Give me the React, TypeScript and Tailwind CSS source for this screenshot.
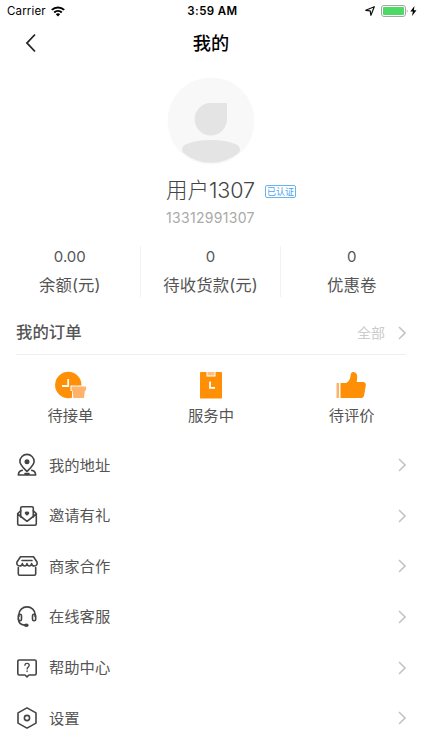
import type { ReactNode } from "react";

const BackIcon = () => (
  <svg width="12" height="20" viewBox="0 0 12 20" fill="none" stroke="#222" strokeWidth="1.8">
    <path d="M10 1.5 2 10l8 8.5" />
  </svg>
);

const ChevronIcon = () => (
  <svg width="9" height="14" viewBox="0 0 9 14" fill="none" stroke="#c4c4c4" strokeWidth="1.6">
    <path d="M2 1 8 7l-6 6" />
  </svg>
);

function StatusBar() {
  return (
    <div className="grid h-[22px] grid-cols-3 items-center pl-[7px] pr-[5px] text-[11.5px] leading-none text-black">
      <div className="flex items-center gap-[5px] pt-px">
        <span className="pt-px tracking-[0.15px]">Carrier</span>
        <svg width="14" height="11" viewBox="0 0 14 11" fill="none" stroke="#000" strokeWidth="2">
          <path d="M.8 3.9a9 9 0 0 1 12.4 0M3.2 6.500a5.500 5.500 0 0 1 7.600 0" />
          <path d="M4.8 8.2a3.2 3.2 0 0 1 4.4 0L7 10.5Z" fill="#000" stroke="none" />
        </svg>
      </div>
      <span className="pt-[2px] pl-px text-center font-semibold tracking-[0.4px]">3:59 AM</span>
      <div className="flex items-center justify-end">
        <svg width="10" height="10" viewBox="0 0 10 10" fill="none" stroke="#111" strokeWidth="1.2" strokeLinejoin="round">
          <path d="M9.300.7 5.900 9.300 5.200 4.900.7 4.300Z" />
        </svg>
        <svg className="ml-[6px]" width="28" height="12" viewBox="0 0 28 12">
          <rect x=".5" y=".5" width="24" height="11" rx="2.5" fill="#fff" stroke="#a5a5a5" />
          <rect x="2" y="2" width="21" height="8" rx="1" fill="#4cd964" />
          <path d="M25.8 4.2c1 .5 1 3.1 0 3.6Z" fill="#a5a5a5" />
        </svg>
        <svg className="ml-px" width="7" height="10" viewBox="0 0 7 10">
          <path d="M4.5 0 .3 5.5h2.6L2 10l4.5-5.8H3.8Z" fill="#000" />
        </svg>
      </div>
    </div>
  );
}

function Avatar() {
  return (
    <svg width="88" height="88" viewBox="0 0 88 88">
      <circle cx="44" cy="44" r="43.5" fill="#f8f8f8" />
      <path d="M43.5 26H60v16.3A16.2 16.2 0 1 1 43.5 26Z" fill="#e4e4e4" />
      <path d="M18.5 67.500c7-3.200 16-4.500 25.500-4.500s18.500 1.300 25.500 4.500c3.500 1.700 4.500 5.800 2.300 8.200A43.500 43.500 0 0 1 16.200 75.700c-2.200-2.400-1.200-6.500 2.300-8.200Z" fill="#e4e4e4" />
    </svg>
  );
}

const stats = [
  { value: "0.00", label: "余额(元)" },
  { value: "0", label: "待收货款(元)" },
  { value: "0", label: "优惠卷" },
];

const orders: { label: string; icon: ReactNode }[] = [
  {
    label: "待接单",
    icon: (
      <svg width="34" height="28" viewBox="0 0 34 28">
        <circle cx="15.300" cy="14" r="13.200" fill="#fe8f06" />
        <path d="M15.200 8v7H9" fill="none" stroke="#fff" strokeWidth="1.800" />
        <path d="M17.500 14.500H34V28H19V20h-1.500Z" fill="#fff" />
        <path d="M18.500 15.500H33v4H18.500ZM19.500 19.400h12.400L31 27H20.400Z" fill="#ffb269" />
      </svg>
    ),
  },
  {
    label: "服务中",
    icon: (
      <svg width="22" height="28" viewBox="0 0 22 28">
        <rect y="1" width="22" height="26.500" rx=".8" fill="#fe8f06" />
        <path d="M6.500 0h9v5.500h-9Z" fill="#fff" />
        <path d="M7.500 1h7v3.500h-7Z" fill="#ffbd7c" />
        <path d="M10 10.500v6.300h5" fill="none" stroke="#fff" strokeWidth="1.800" />
      </svg>
    ),
  },
  {
    label: "待评价",
    icon: (
      <svg width="31" height="28" viewBox="0 0 31 28">
        <path d="M.5 12H3v15H.5Z" fill="#ffb269" />
        <path d="M4.500 12H10c2.500-1 4.300-3.600 4.600-7.500.2-2.600 1.600-3.700 3.200-3.400 2.400.4 3.700 2.700 3.400 5.500L20.700 11H27c2 0 3.100 1.300 2.800 3.200l-1.600 9.700c-.3 2-1.600 3.100-3.500 3.100H4.500Z" fill="#fe8f06" />
      </svg>
    ),
  },
];

const menu: { label: string; icon: ReactNode }[] = [
  {
    label: "我的地址",
    icon: (
      <>
        <path d="M12 18.500C8 14.500 4.900 11.900 4.900 8.500a7.100 7.100 0 0 1 14.200 0c0 3.400-3.100 6-7.100 10Z" />
        <path d="M7.300 17.400c-2.400.2-3.700 1.800-4 4.600h17.400c-.3-2.800-1.600-4.400-4-4.600M10 20.600h4" />
        <circle cx="12" cy="8.700" r="1.700" fill="#444" />
      </>
    ),
  },
  {
    label: "邀请有礼",
    icon: (
      <>
        <path d="M5.700 13V4.100q0-1.300 1.300-1.300h10q1.300 0 1.300 1.300V13" />
        <path d="M5.700 6.800 2.700 9.500v10.200q0 1.500 1.500 1.500h15.600q1.500 0 1.500-1.500V9.500l-3-2.700M2.700 10l9.300 7.300L21.300 10" />
        <path d="m12 10.800-1.200-1.200c-.8-1.200.6-1.900 1.200-.9.600-1 2-.3 1.200.9Z" fill="#444" />
      </>
    ),
  },
  {
    label: "商家合作",
    icon: (
      <>
        <path d="M5.500 2.700h13l3.500 5.300c.7 2.300-.6 4-2.700 4-1.700 0-2.500-1-2.700-2.400-.3 1.600-1.300 2.400-2.300 2.400-1.200 0-2-.8-2.300-2.400-.3 1.600-1.100 2.400-2.300 2.400-1 0-2-.8-2.300-2.400-.2 1.400-1 2.400-2.700 2.400-2.100 0-3.400-1.700-2.700-4ZM7 6.500h10" />
        <path d="M3.300 13.500v6.300q0 1.500 1.500 1.500h14.400q1.500 0 1.500-1.500v-6.300" />
      </>
    ),
  },
  {
    label: "在线客服",
    icon: (
      <>
        <path d="M3.900 11.500v-2a8.100 7.600 0 0 1 16.200 0v2" />
        <rect x="3.300" y="9.300" width="3.200" height="6.400" rx="1.500" />
        <rect x="17.500" y="9.300" width="3.200" height="6.400" rx="1.500" />
        <path d="M3.500 14c0 3.500 1.700 5.700 6 6.100" />
        <ellipse cx="11.300" cy="20.200" rx="1.600" ry="1" fill="#444" />
      </>
    ),
  },
  {
    label: "帮助中心",
    icon: (
      <>
        <path d="M4.300 4h15.400q1.500 0 1.500 1.500v12q0 1.500-1.500 1.500H14l-2 1.800L10 19H4.300q-1.500 0-1.500-1.500v-12Q2.800 4 4.300 4Z" />
        <path d="M9.900 9.300c0-2.700 4.300-2.600 4.300 0 0 1.500-2.100 1.800-2.100 3.700M12.100 14.900v.6" strokeWidth="1.300" />
      </>
    ),
  },
  {
    label: "设置",
    icon: (
      <>
        <path d="m12 1.900 9 5v10.200l-9 5-9-5V6.900Z" />
        <circle cx="12" cy="12" r="2.600" />
      </>
    ),
  },
];

export default function App() {
  return (
    <div className="flex h-[750px] w-[422px] flex-col overflow-hidden bg-white font-['Inter','Noto_Sans_CJK_SC',sans-serif] text-[#555]">
      <StatusBar />

      <header className="grid h-[42px] grid-cols-3 items-center">
        <div className="pl-[25px]">
          <BackIcon />
        </div>
        <h1 className="text-center text-[18.200px] leading-none font-medium text-black">我的</h1>
      </header>

      <section className="flex flex-col items-center pt-[13px]">
        <Avatar />
        <div className="mt-[12px] flex h-7 items-center gap-[8px] self-start pl-[166px]">
          <span className="w-[91px] text-[21.500px] leading-none font-light tracking-[-0.050px] whitespace-nowrap text-[#444]">
            用户1307
          </span>
          <span className="flex h-[13px] w-[31px] items-center justify-center rounded-[2px] border border-[#6bb3f0] text-[9px] leading-none text-[#4ba3ee]">
            已认证
          </span>
        </div>
        <div className="mt-[4px] self-start pl-[166px] text-[14px] leading-[18px] tracking-[0.300px] text-[#aaa]">
          13312991307
        </div>
      </section>

      <section className="mt-[19px] grid h-[48px] grid-cols-3 divide-x divide-[#f2f2f2]">
        {stats.map((item) => (
          <div key={item.label} className="flex flex-col items-center">
            <span className="mt-[2px] text-[15px] leading-[18px]">{item.value}</span>
            <span className="mt-[7px] text-[16.400px] leading-[24px] tracking-[0.100px] whitespace-nowrap">{item.label}</span>
          </div>
        ))}
      </section>

      <section>
        <div className="mx-4 mt-[17px] flex h-[44px] items-center border-b border-[#eee]">
          <h2 className="text-[16.400px] leading-none font-medium">我的订单</h2>
          <span className="ml-auto text-[14px] leading-none text-[#ccc]">全部</span>
          <span className="ml-[12px]">
            <ChevronIcon />
          </span>
        </div>
        <div className="grid grid-cols-3 pt-[16px]">
          {orders.map((item) => (
            <div key={item.label} className="flex flex-col items-center">
              {item.icon}
              <span className="mt-[6px] text-[15.300px] leading-[22px]">{item.label}</span>
            </div>
          ))}
        </div>
      </section>

      <ul className="mt-[13px]">
        {menu.map((item) => (
          <li key={item.label} className="flex h-[50.600px] items-center pr-4 pl-[15px]">
            <svg
              width="24"
              height="24"
              viewBox="0 0 24 24"
              fill="none"
              stroke="#444"
              strokeWidth="1.600"
              strokeLinecap="round"
              strokeLinejoin="round"
            >
              {item.icon}
            </svg>
            <span className="mr-auto ml-[10px] text-[15.300px] leading-none">{item.label}</span>
            <ChevronIcon />
          </li>
        ))}
      </ul>
    </div>
  );
}
